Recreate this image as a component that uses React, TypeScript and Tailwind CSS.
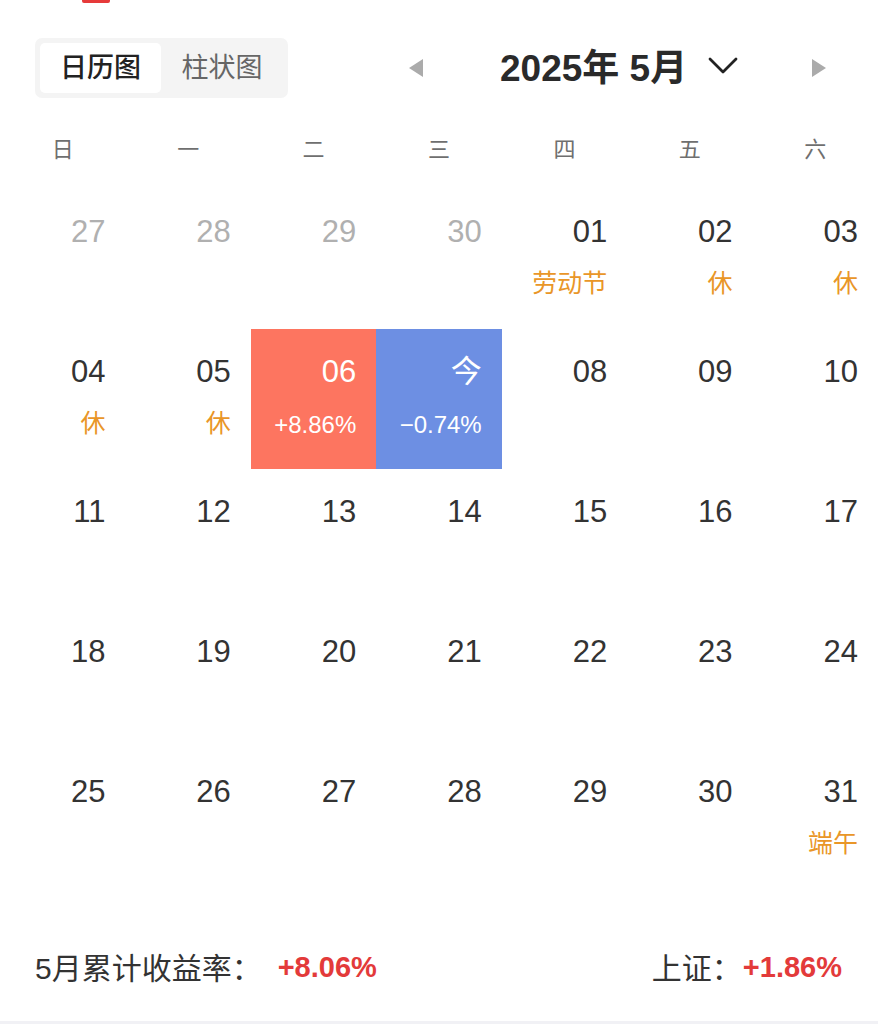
type Day = {
  label: string;
  muted?: boolean;
  note?: string;
  tone?: "up" | "down";
  rate?: string;
};

const weekdays = ["日", "一", "二", "三", "四", "五", "六"];

const days: Day[] = [
  { label: "27", muted: true },
  { label: "28", muted: true },
  { label: "29", muted: true },
  { label: "30", muted: true },
  { label: "01", note: "劳动节" },
  { label: "02", note: "休" },
  { label: "03", note: "休" },
  { label: "04", note: "休" },
  { label: "05", note: "休" },
  { label: "06", tone: "up", rate: "+8.86%" },
  { label: "今", tone: "down", rate: "−0.74%" },
  { label: "08" },
  { label: "09" },
  { label: "10" },
  { label: "11" },
  { label: "12" },
  { label: "13" },
  { label: "14" },
  { label: "15" },
  { label: "16" },
  { label: "17" },
  { label: "18" },
  { label: "19" },
  { label: "20" },
  { label: "21" },
  { label: "22" },
  { label: "23" },
  { label: "24" },
  { label: "25" },
  { label: "26" },
  { label: "27" },
  { label: "28" },
  { label: "29" },
  { label: "30" },
  { label: "31", note: "端午" },
];

function DayCell({ day }: { day: Day }) {
  const bg =
    day.tone === "up" ? "bg-[#fd7560]" : day.tone === "down" ? "bg-[#6d8fe3]" : "";
  const numColor = day.tone ? "text-white" : day.muted ? "text-[#b0b0b0]" : "text-[#333333]";

  return (
    <div className={`h-[140px] pr-[20px] text-right ${bg}`}>
      <div className={`pt-[25px] h-[60px] leading-[36px] text-[31px] ${numColor}`}>
        {day.label}
      </div>
      {day.rate && (
        <div className="mt-[21px] leading-[30px] text-[24px] text-white">{day.rate}</div>
      )}
      {day.note && (
        <div className="mt-[19px] leading-[30px] text-[25px] text-[#e99628]">{day.note}</div>
      )}
    </div>
  );
}

export default function App() {
  return (
    <div
      className="w-[878px] h-[1024px] bg-white flex flex-col overflow-hidden"
      style={{ fontFamily: '"Liberation Sans", "Noto Sans CJK SC", sans-serif' }}
    >
      {/* active tab marker */}
      <div className="ml-[82px] w-[28px] h-[3px] rounded-b-[2px] bg-[#e63a3a]" />

      {/* view switch + month picker */}
      <div className="mt-[35px] h-[60px] flex items-center">
        <div className="ml-[35px] w-[253px] h-[60px] rounded-[7px] bg-[#f4f4f4] p-[5px] flex">
          <div className="w-[121px] rounded-[5px] bg-white flex items-center justify-center text-[27px] font-medium text-[#222222]">
            日历图
          </div>
          <div className="flex-1 flex items-center justify-center text-[27px] text-[#666666]">
            柱状图
          </div>
        </div>

        <div className="ml-[120px] flex items-center">
          <svg width="16" height="20" viewBox="0 0 16 20">
            <path d="M15 1 L1 10 L15 19 Z" fill="#ababab" />
          </svg>
          <div className="ml-[76px] text-[37px] font-bold text-[#2a2a2a] leading-none">
            2025年 5月
          </div>
          <svg className="ml-[21px] mb-[4px]" width="30" height="18" viewBox="0 0 30 18">
            <path
              d="M2 2 L15 15 L28 2"
              fill="none"
              stroke="#222222"
              strokeWidth="2.8"
              strokeLinecap="round"
              strokeLinejoin="round"
            />
          </svg>
          <svg className="ml-[73px]" width="16" height="20" viewBox="0 0 16 20">
            <path d="M1 1 L15 10 L1 19 Z" fill="#ababab" />
          </svg>
        </div>
      </div>

      {/* weekday header */}
      <div className="mt-[12px] h-[79px] grid grid-cols-7 items-center">
        {weekdays.map(w => (
          <div key={w} className="text-center text-[22px] text-[#6f6f6f]">
            {w}
          </div>
        ))}
      </div>

      {/* day grid */}
      <div className="grid grid-cols-7">
        {days.map((d, i) => (
          <DayCell key={i} day={d} />
        ))}
      </div>

      {/* monthly summary */}
      <div className="mt-[61px] h-[36px] pl-[35px] pr-[36px] flex items-center justify-between">
        <div className="flex items-center">
          <span className="text-[30px] text-[#333333]">5月累计收益率：</span>
          <span className="ml-[16px] text-[29px] font-bold text-[#e33a3a]">+8.06%</span>
        </div>
        <div className="flex items-center">
          <span className="text-[30px] text-[#333333]">上证：</span>
          <span className="ml-[1px] text-[29px] font-bold text-[#e33a3a]">+1.86%</span>
        </div>
      </div>

      <div className="mt-auto h-[3px] bg-[#f1f1f5]" />
    </div>
  );
}
